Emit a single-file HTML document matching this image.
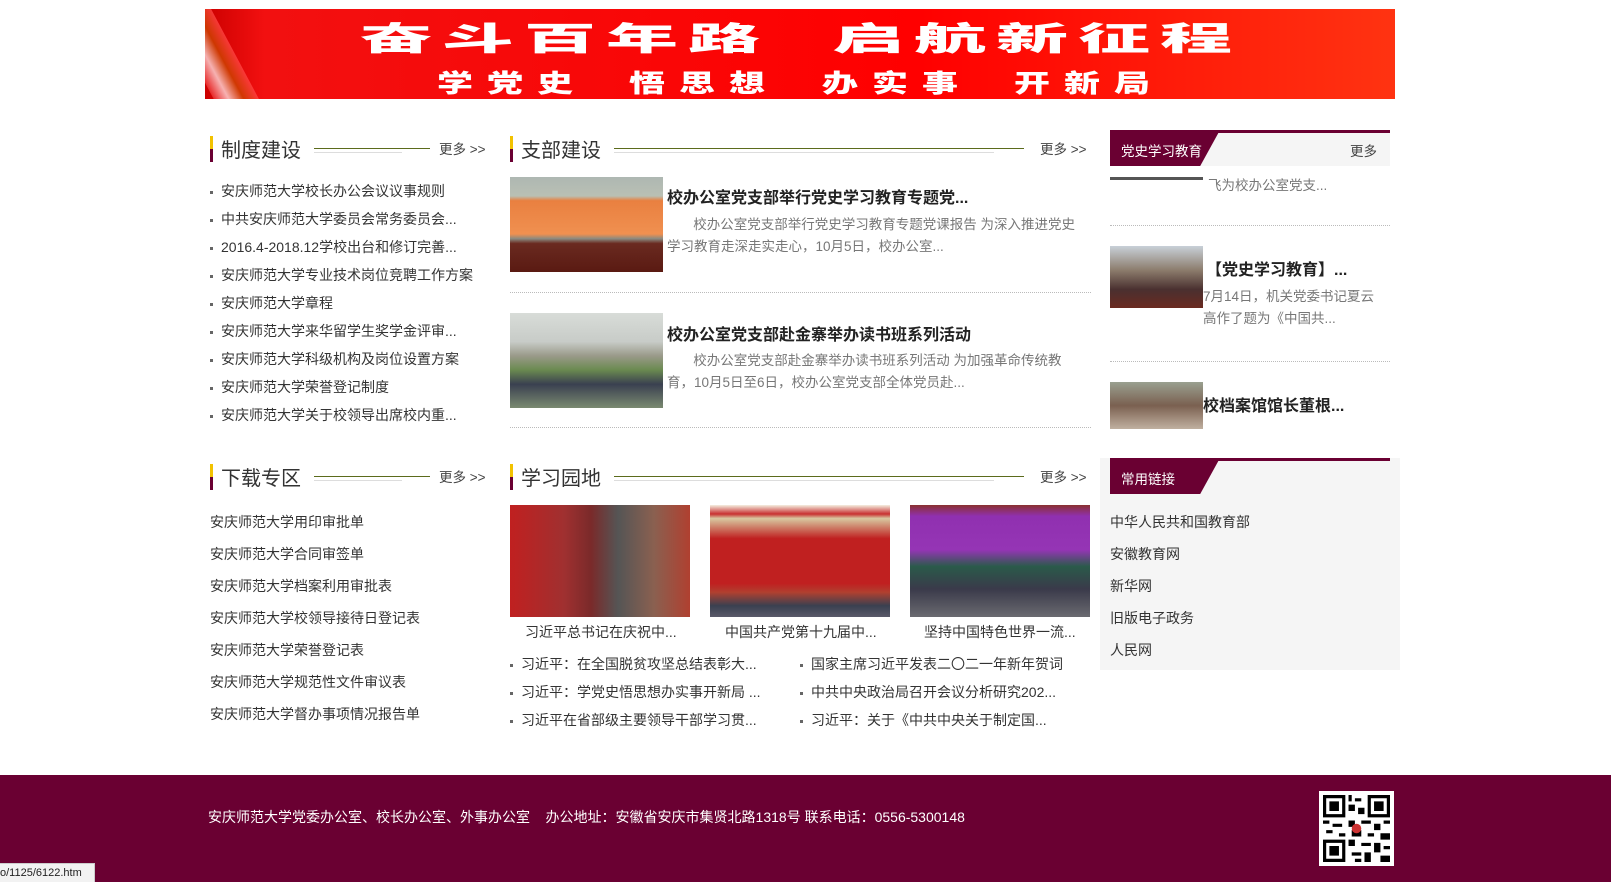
<!DOCTYPE html>
<html><head><meta charset="utf-8">
<style>
*{margin:0;padding:0;box-sizing:border-box}
body{width:1611px;height:882px;position:relative;overflow:hidden;background:#fff;font-family:"Liberation Sans","Noto Sans CJK SC",sans-serif;color:#333}
.a{position:absolute;white-space:nowrap}
.hd{position:absolute;height:26px}
.hd .bar{position:absolute;left:0;top:0;width:3px;height:26px;background:linear-gradient(#f2c200 0 50%,#6a0032 50%)}
.hd .t{position:absolute;left:11px;top:-2px;font-size:20px;color:#333}
.hd .l1{position:absolute;height:1px;background:#5b6b1c;top:12px}
.hd .l2{position:absolute;height:1px;background:#ddd;top:16px}
.hd .m{position:absolute;top:2px;font-size:13.5px;color:#444}
.li{font-size:14px;color:#333}
.dot{display:inline-block;width:3px;height:3px;background:#666;margin-right:8px;vertical-align:middle}
.gr{font-size:13.5px;color:#777}
.tt{font-size:16px;font-weight:bold;color:#222}
.dash{position:absolute;height:0;border-top:1px dotted #bbb}
.bn{position:absolute;color:#fff;font-weight:900;font-family:'Noto Sans CJK SC',sans-serif;white-space:nowrap;transform-origin:0 0}
.b1{font-size:72px;letter-spacing:10px;line-height:72px;top:11px;transform:scaleY(.45)}
.b2{font-size:36px;letter-spacing:14px;line-height:36px;top:60px;transform:scaleY(.7)}
</style></head><body>

<div class="a" style="left:205px;top:9px;width:1190px;height:90px;background:linear-gradient(90deg,#c00 0,#f21010 5%,#f00 60%,#f31 100%);overflow:hidden">
  <div style="position:absolute;left:-10px;top:-20px;width:40px;height:140px;background:linear-gradient(90deg,#e33,#fdd,#c40,#f44);transform:rotate(-28deg);opacity:.8"></div>
  <div class="bn b1" style="left:155px">奋斗百年路</div>
  <div class="bn b1" style="left:627px">启航新征程</div>
  <div class="bn b2" style="left:232px">学党史</div>
  <div class="bn b2" style="left:424px">悟思想</div>
  <div class="bn b2" style="left:617px">办实事</div>
  <div class="bn b2" style="left:809px">开新局</div>
</div>

<div class="hd" style="left:210px;top:136px;width:280px"><div class="bar"></div><div class="t">制度建设</div><div class="l1" style="left:104px;width:116px"></div><div class="l2" style="left:104px;width:88px"></div><div class="m" style="left:229px">更多 &gt;&gt;</div></div>
<div class="a li" style="left:210px;top:177px;line-height:28px">
<div><span class="dot"></span>安庆师范大学校长办公会议议事规则</div>
<div><span class="dot"></span>中共安庆师范大学委员会常务委员会...</div>
<div><span class="dot"></span>2016.4-2018.12学校出台和修订完善...</div>
<div><span class="dot"></span>安庆师范大学专业技术岗位竞聘工作方案</div>
<div><span class="dot"></span>安庆师范大学章程</div>
<div><span class="dot"></span>安庆师范大学来华留学生奖学金评审...</div>
<div><span class="dot"></span>安庆师范大学科级机构及岗位设置方案</div>
<div><span class="dot"></span>安庆师范大学荣誉登记制度</div>
<div><span class="dot"></span>安庆师范大学关于校领导出席校内重...</div>
</div>

<div class="hd" style="left:510px;top:136px;width:581px"><div class="bar"></div><div class="t">支部建设</div><div class="l1" style="left:104px;width:410px"></div><div class="l2" style="left:104px;width:380px"></div><div class="m" style="left:530px">更多 &gt;&gt;</div></div>
<div class="a" style="left:510px;top:177px;width:153px;height:95px;background:linear-gradient(#aeb7b2 0,#b9c0b4 20%,#e98040 25%,#f09050 60%,#8a8a80 65%,#6a2a20 70%,#5a1a12 100%)"></div>
<div class="a tt" style="left:667px;top:184px">校办公室党支部举行党史学习教育专题党...</div>
<div class="a gr" style="left:667px;top:214px;line-height:22px;white-space:normal;width:418px">&nbsp;&nbsp;&nbsp;&nbsp;&nbsp;&nbsp;&nbsp;校办公室党支部举行党史学习教育专题党课报告 为深入推进党史学习教育走深走实走心，10月5日，校办公室...</div>
<div class="dash" style="left:510px;top:292px;width:581px"></div>
<div class="a" style="left:510px;top:313px;width:153px;height:95px;background:linear-gradient(#d8dcd8 0,#c8ccc8 30%,#9a9a8a 45%,#6a8a50 60%,#3a4050 75%,#7a8a70 100%)"></div>
<div class="a tt" style="left:667px;top:321px">校办公室党支部赴金寨举办读书班系列活动</div>
<div class="a gr" style="left:667px;top:350px;line-height:22px;white-space:normal;width:418px">&nbsp;&nbsp;&nbsp;&nbsp;&nbsp;&nbsp;&nbsp;校办公室党支部赴金寨举办读书班系列活动 为加强革命传统教育，10月5日至6日，校办公室党支部全体党员赴...</div>
<div class="dash" style="left:510px;top:427px;width:581px"></div>

<div class="a" style="left:1110px;top:130px;width:280px;height:36px;background:#f5f5f5;border-top:3px solid #6a0032"></div>
<div class="a" style="left:1110px;top:130px;width:110px;height:36px;background:#6a0032;clip-path:polygon(0 0,100% 0,82% 100%,0 100%)"></div>
<div class="a" style="left:1121px;top:140px;font-size:13.5px;color:#fff">党史学习教育</div>
<div class="a" style="left:1350px;top:140px;font-size:13.5px;color:#444">更多</div>
<div class="a" style="left:1110px;top:177px;width:93px;height:3px;background:#555"></div>
<div class="a gr" style="left:1208px;top:174px">飞为校办公室党支...</div>
<div class="dash" style="left:1110px;top:225px;width:280px"></div>
<div class="a" style="left:1110px;top:246px;width:93px;height:62px;background:linear-gradient(#c8d0d8,#8a7a6a 40%,#4a3030 70%,#6a2a20)"></div>
<div class="a tt" style="left:1206px;top:256px">【党史学习教育】...</div>
<div class="a gr" style="left:1203px;top:286px;line-height:22px">7月14日，机关党委书记夏云<br>高作了题为《中国共...</div>
<div class="dash" style="left:1110px;top:361px;width:280px"></div>
<div class="a" style="left:1110px;top:382px;width:93px;height:47px;background:linear-gradient(#9aa090,#7a6050 50%,#c0b0a0)"></div>
<div class="a tt" style="left:1203px;top:392px">校档案馆馆长董根...</div>

<div class="hd" style="left:210px;top:464px;width:280px"><div class="bar"></div><div class="t">下载专区</div><div class="l1" style="left:104px;width:116px"></div><div class="l2" style="left:104px;width:88px"></div><div class="m" style="left:229px">更多 &gt;&gt;</div></div>
<div class="a li" style="left:210px;top:506px;line-height:32px">
<div>安庆师范大学用印审批单</div>
<div>安庆师范大学合同审签单</div>
<div>安庆师范大学档案利用审批表</div>
<div>安庆师范大学校领导接待日登记表</div>
<div>安庆师范大学荣誉登记表</div>
<div>安庆师范大学规范性文件审议表</div>
<div>安庆师范大学督办事项情况报告单</div>
</div>

<div class="hd" style="left:510px;top:464px;width:581px"><div class="bar"></div><div class="t">学习园地</div><div class="l1" style="left:104px;width:410px"></div><div class="l2" style="left:104px;width:380px"></div><div class="m" style="left:530px">更多 &gt;&gt;</div></div>
<div class="a" style="left:510px;top:505px;width:180px;height:112px;background:linear-gradient(90deg,#c02020 0,#a03030 30%,#7a2a2a 45%,#555 60%,#8a6050 80%,#b04030 100%)"></div>
<div class="a" style="left:710px;top:505px;width:180px;height:112px;background:linear-gradient(#f5efe0 0,#c83030 8%,#d8c8a0 12%,#c02020 30%,#c02020 70%,#b04030 78%,#3a4050 90%,#5a5a6a 100%)"></div>
<div class="a" style="left:910px;top:505px;width:180px;height:112px;background:linear-gradient(#8a3030 0,#9030b0 10%,#9535b5 40%,#2a5a4a 55%,#3a3a4a 75%,#6a6a70 100%)"></div>
<div class="a li" style="left:525px;top:622px">习近平总书记在庆祝中...</div>
<div class="a li" style="left:725px;top:622px">中国共产党第十九届中...</div>
<div class="a li" style="left:924px;top:622px">坚持中国特色世界一流...</div>
<div class="a li" style="left:510px;top:650px;line-height:28px">
<div><span class="dot"></span>习近平：在全国脱贫攻坚总结表彰大...</div>
<div><span class="dot"></span>习近平：学党史悟思想办实事开新局 ...</div>
<div><span class="dot"></span>习近平在省部级主要领导干部学习贯...</div>
</div>
<div class="a li" style="left:800px;top:650px;line-height:28px">
<div><span class="dot"></span>国家主席习近平发表二〇二一年新年贺词</div>
<div><span class="dot"></span>中共中央政治局召开会议分析研究202...</div>
<div><span class="dot"></span>习近平：关于《中共中央关于制定国...</div>
</div>

<div class="a" style="left:1100px;top:458px;width:300px;height:212px;background:#f5f5f5"></div>
<div class="a" style="left:1110px;top:458px;width:280px;height:3px;background:#6a0032"></div>
<div class="a" style="left:1110px;top:458px;width:110px;height:36px;background:#6a0032;clip-path:polygon(0 0,100% 0,82% 100%,0 100%)"></div>
<div class="a" style="left:1121px;top:468px;font-size:13.5px;color:#fff">常用链接</div>
<div class="a li" style="left:1110px;top:506px;line-height:32px">
<div>中华人民共和国教育部</div>
<div>安徽教育网</div>
<div>新华网</div>
<div>旧版电子政务</div>
<div>人民网</div>
</div>

<div class="a" style="left:0;top:775px;width:1611px;height:107px;background:#6a0032"></div>
<div class="a" style="left:208px;top:807px;font-size:14px;color:#fff">安庆师范大学党委办公室、校长办公室、外事办公室&nbsp;&nbsp;&nbsp;&nbsp;办公地址：安徽省安庆市集贤北路1318号 联系电话：0556-5300148</div>
<div class="a" style="left:1319px;top:791px;width:75px;height:75px;background:#fff;padding:4px">
<svg width="67" height="67" viewBox="0 0 21 21"><rect width="21" height="21" fill="#fff"/><g fill="#000"><path d="M0 0h7v7H0zM14 0h7v7h-7zM0 14h7v7H0z"/></g><g fill="#fff"><path d="M1 1h5v5H1zM15 1h5v5h-5zM1 15h5v5H1z"/></g><g fill="#000"><path d="M2 2h3v3H2zM16 2h3v3h-3zM2 16h3v3H2zM8 0h1v2H8zM10 1h2v1h-2zM8 3h2v2H8zM11 4h2v2h-2zM0 8h2v1H0zM3 9h3v1H3zM8 8h2v2H8zM12 8h3v1h-3zM16 9h2v2h-2zM19 8h2v1h-2zM1 11h2v1H1zM5 12h2v1H5zM9 11h3v2H9zM14 12h2v1h-2zM18 12h3v2h-3zM8 14h2v2H8zM12 15h3v1h-3zM16 15h2v3h-2zM19 16h2v1h-2zM9 18h3v1H9zM13 18h2v3h-2zM18 19h3v2h-3zM10 20h2v1h-2z"/></g><circle cx="10.5" cy="10.5" r="1.5" fill="#c33"/></svg>
</div>

<div class="a" style="left:0;top:863px;width:95px;height:19px;background:#f2f2f2;border:1px solid #ccc;border-left:0;border-bottom:0;font-size:11px;color:#222;padding:3px 0 0 0">o/1125/6122.htm</div>
</body></html>
